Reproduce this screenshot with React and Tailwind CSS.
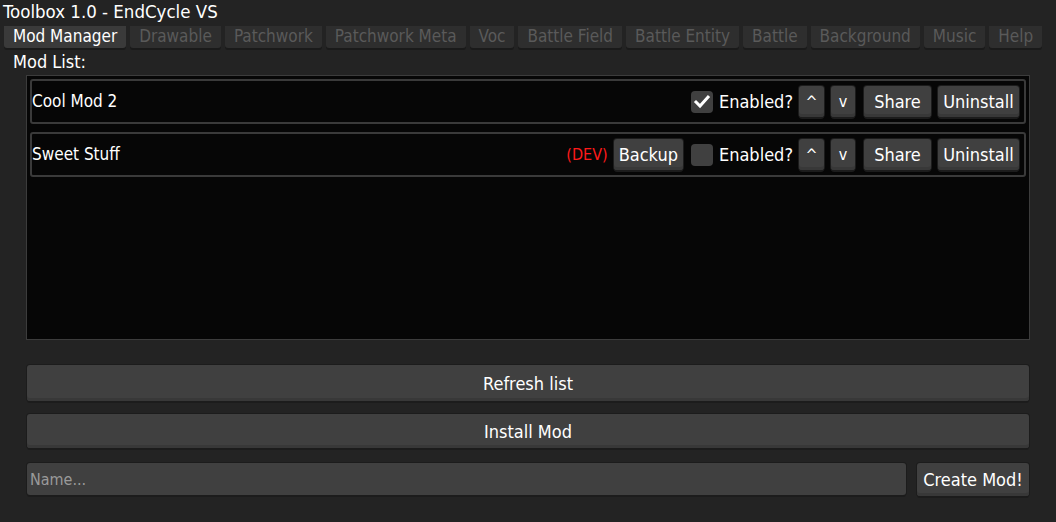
import React, { useState } from 'react';

const font = { fontFamily: '"DejaVu Sans Condensed", "DejaVu Sans", sans-serif' };

const btn =
    "bg-[#404040] text-white rounded-[3px] shadow-[0_0_0_1px_#1c1c1c,0_2px_0_#1c1c1c,inset_0_-3px_0_#383838] flex items-center justify-center";

const tabs = [
    "Mod Manager",
    "Drawable",
    "Patchwork",
    "Patchwork Meta",
    "Voc",
    "Battle Field",
    "Battle Entity",
    "Battle",
    "Background",
    "Music",
    "Help",
];

const ModRow = ({ name, dev, enabled }) => {
    const [on, setOn] = useState(enabled);
    return (
        <div className="h-[45px] border-2 border-[#3a3a3a] rounded-[3px] bg-[#060606] flex items-center pl-[0px] pr-[5px]">
            <span className="text-white text-[17px] flex-1">{name}</span>
            {dev && <span className="text-[#ff1a1a] text-[16px] mr-[6px]">(DEV)</span>}
            {dev && <button className={`${btn} h-[31px] px-[5px] text-[18px] mr-[8px]`}>Backup</button>}
            <button
                onClick={() => setOn(!on)}
                className="w-[22px] h-[22px] rounded-[4px] bg-[#404040] flex items-center justify-center mr-[6px]"
            >
                {on && (
                    <svg className="w-[18px] h-[18px]" viewBox="0 0 18 18" fill="none" stroke="white" strokeWidth="3" strokeLinecap="square">
                        <path d="M3 9l4 4 8-9" />
                    </svg>
                )}
            </button>
            <span className="text-white text-[18px] mr-[6px]">Enabled?</span>
            <button className={`${btn} w-[25px] h-[31px] text-[16px] mr-[7px]`}>^</button>
            <button className={`${btn} w-[24px] h-[31px] text-[16px] mr-[9px]`}>v</button>
            <button className={`${btn} w-[67px] h-[31px] text-[18px] mr-[7px]`}>Share</button>
            <button className={`${btn} w-[81px] h-[31px] text-[18px]`}>Uninstall</button>
        </div>
    );
};

export default function App() {
    return (
        <div className="w-[1056px] h-[522px] bg-[#232323] overflow-hidden flex flex-col" style={font}>
            {/* Title */}
            <div className="text-white text-[18.5px] leading-[24px] pl-[3px] h-[26px]">Toolbox 1.0 - EndCycle VS</div>

            {/* Tabs */}
            <div className="flex gap-[4px] pl-[4px] h-[24px]">
                {tabs.map((t, i) => (
                    <div
                        key={t}
                        className={`h-[22px] px-[9px] rounded-b-[3px] text-[17px] leading-[20px] shadow-[0_2px_0_#1a1a1a] ${
                            i === 0 ? "bg-[#3a3a3a] text-white" : "bg-[#2e2e2e] text-[#5a5a5a]"
                        }`}
                    >
                        {t}
                    </div>
                ))}
            </div>

            {/* Mod List label */}
            <div className="text-white text-[18px] leading-[24px] pl-[13px] h-[25px]">Mod List:</div>

            {/* List panel */}
            <div className="mx-[26px] h-[265px] bg-[#060606] border border-[#3c3c3c] p-[3px] flex flex-col gap-[8px]">
                <ModRow name="Cool Mod 2" enabled />
                <ModRow name="Sweet Stuff" dev enabled={false} />
            </div>

            {/* Actions */}
            <button className={`${btn} mx-[27px] mt-[25px] h-[36px] text-[18px]`}>Refresh list</button>
            <button className={`${btn} mx-[27px] mt-[13px] h-[34px] text-[18px]`}>Install Mod</button>

            <div className="flex mx-[27px] mt-[15px] gap-[11px]">
                <input
                    placeholder="Name..."
                    className="flex-1 h-[32px] bg-[#404040] rounded-[3px] px-[3px] text-[16px] text-white placeholder:text-[#9a9a9a] outline-none shadow-[0_0_0_1px_#1c1c1c,0_2px_0_#1c1c1c]"
                />
                <button className={`${btn} w-[112px] h-[33px] text-[18px]`}>Create Mod!</button>
            </div>
        </div>
    );
}
